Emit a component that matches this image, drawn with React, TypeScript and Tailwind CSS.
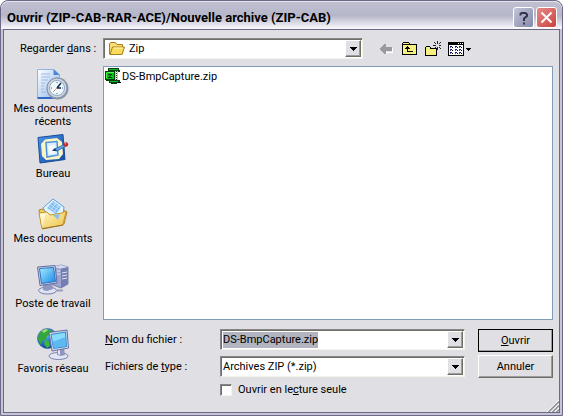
import React from 'react';
import { useEffect, useRef, useState } from 'react';

interface Place {
  id: string;
  label: string;
  icon: React.ReactNode;
}

function RecentIcon() {
  return (
    <svg viewBox="0 0 32 32" className="w-8 h-8" aria-hidden="true">
      <defs>
        <linearGradient id="paper" x1="0" y1="0" x2="1" y2="1">
          <stop offset="0" stopColor="#ffffff" />
          <stop offset="1" stopColor="#8db6ec" />
        </linearGradient>
      </defs>
      <path d="M.5 1.500h16l6 5V30H.5z" fill="url(#paper)" stroke="#8fb3e6" />
      <path d="M.5 30h21" stroke="#2f68c0" strokeWidth="2" />
      <path d="M16.500 1v6h6z" fill="#4d86d6" />
      <path d="M4 6h9M4 9h9M4 12h7M4 15h4M4 18h3M4 21h3M4 24h5" stroke="#9dbbe4" />
      <circle cx="20.500" cy="20.500" r="11" fill="#8793a6" />
      <circle cx="20" cy="20" r="10" fill="#cdd4de" stroke="#8796ac" />
      <circle cx="20" cy="20" r="7.500" fill="#effaff" stroke="#94a9c4" />
      <path d="M20 14v1M20 25v1M14 20h1M25 20h1" stroke="#3b5f8f" />
      <path d="M20 20l4-5M20 20h4" stroke="#16294a" strokeWidth="1.500" />
      <path d="M20 20l-4 4" stroke="#e08a70" />
    </svg>
  );
}

function DesktopIcon() {
  return (
    <svg viewBox="0 0 32 32" className="w-8 h-8" aria-hidden="true">
      <defs>
        <linearGradient id="blotter" x1="0" y1="0" x2="1" y2="1">
          <stop offset="0" stopColor="#4c97ea" />
          <stop offset="1" stopColor="#12479f" />
        </linearGradient>
      </defs>
      <path d="M1 4.500L26 1.500l2 25L3 30z" fill="url(#blotter)" stroke="#174c9c" />
      <path d="M8 6.500l12-1.500 5 4 1 12-4 5L9 27l-4-4-1-12z" fill="#fdf3c4" />
      <path d="M9 9.500l11-1 1 13.500-11 2z" fill="#d9efff" stroke="#4c93dc" strokeWidth="1.500" />
      <path d="M11 13l7-1v8l-6 1z" fill="#ffffff" opacity=".7" />
      <path d="M16 17l10-5 3 1-9 5z" fill="#62a9ec" stroke="#225d9f" strokeWidth=".8" />
      <path d="M15 18l3-3 2 3z" fill="#1c4170" />
      <circle cx="29" cy="11.500" r="2.200" fill="#c32b2b" />
      <circle cx="28.500" cy="10.800" r=".7" fill="#f19b8d" />
    </svg>
  );
}

function DocumentsIcon() {
  return (
    <svg viewBox="0 0 32 32" className="w-8 h-8" aria-hidden="true">
      <defs>
        <linearGradient id="flap" x1="0" y1="0" x2="1" y2="1">
          <stop offset="0" stopColor="#fff7c6" />
          <stop offset="1" stopColor="#efc248" />
        </linearGradient>
      </defs>
      <path d="M2 12l3-1 5 2 16-1 4 2-3 12L5 30z" fill="#f1cb5c" stroke="#b5882b" />
      <path d="M16 1l11 8-1 9-14 1-6-9z" fill="#e3f3ff" stroke="#5d9fe2" />
      <path d="M16 3l8 6-5 7-9-6z" fill="#7fbcf2" />
      <path d="M13 6l8 6M15 4l8 6M11 8l8 6M19 5l-6 8M22 7l-6 8" stroke="#d8ecff" strokeWidth=".7" />
      <path d="M5 30.500L2 15l8-1 3 3 12-2 4-2-3 14z" fill="url(#flap)" stroke="#c6962d" />
      <path d="M5 29L3 16l6-1z" fill="#fffbe0" opacity=".7" />
      <path d="M16 17l7-1-2 6z" fill="#8cc1ee" />
      <path d="M5 31l21-4" stroke="#9c7120" />
    </svg>
  );
}

function ComputerIcon() {
  return (
    <svg viewBox="0 0 32 32" className="w-8 h-8" aria-hidden="true">
      <defs>
        <linearGradient id="screen" x1="0" y1="0" x2="1" y2="1">
          <stop offset="0" stopColor="#a9ecff" />
          <stop offset="1" stopColor="#1687e8" />
        </linearGradient>
      </defs>
      <path d="M16 4l8-2 7 2v17l-7 4-8-3z" fill="#9ca5cf" stroke="#686f9f" strokeWidth=".8" />
      <path d="M24 5l7-1v17l-7 4z" fill="#747eb2" />
      <path d="M16 4l8-2 7 2-7 1.500z" fill="#d6daf0" />
      <path d="M20 8h3M20 11h3M25 10l5-1M25 13l5-1M25 16l5-1" stroke="#e1e5f7" />
      <ellipse cx="10.500" cy="27.500" rx="9" ry="3.500" fill="#dfe2f2" stroke="#7880b2" />
      <path d="M6 21l9-1 1 6-6 2-4-1z" fill="#8d95c3" />
      <path d="M.5 4L18 2.500 20 20 3 22.500z" fill="#cfd3ea" stroke="#656ca3" />
      <path d="M2.500 5.500L16.500 4.500 18.500 18.500 4.500 20.500z" fill="url(#screen)" stroke="#2c75bb" />
      <path d="M20 27.500h6" stroke="#9a9fb8" strokeWidth="2" />
    </svg>
  );
}

function NetworkIcon() {
  return (
    <svg viewBox="0 0 32 32" className="w-8 h-8" aria-hidden="true">
      <defs>
        <radialGradient id="globe" cx=".35" cy=".25" r=".8">
          <stop offset="0" stopColor="#8fd4ff" />
          <stop offset=".5" stopColor="#267fd9" />
          <stop offset="1" stopColor="#103b90" />
        </radialGradient>
      </defs>
      <circle cx="10.500" cy="10.500" r="10" fill="url(#globe)" stroke="#24529a" strokeWidth=".6" />
      <path d="M2 5l7-4 7 2-3 4-3 1-1 4-4 1-1 4-3-5z" fill="#35a63b" />
      <path d="M8 12l4 1 1 5-3 2-3-4z" fill="#3fb33f" />
      <path d="M5 3l4-2 2 1-4 3z" fill="#9be36b" />
      <ellipse cx="21.500" cy="28" rx="9.500" ry="3.500" fill="#e3e6f2" stroke="#7c82ae" />
      <path d="M20 21l7-1 1 7-4 1-4-1z" fill="#8f96bf" />
      <path d="M21 21h2v6l-2-1z" fill="#dfe3f4" />
      <path d="M12 4.500L30 2l1.500 18L15 23z" fill="#d5d9ee" stroke="#666ea4" />
      <path d="M14 6.500L28.500 4l1 14.500-13 2z" fill="#8adafa" stroke="#348bcc" />
      <path d="M15 14l13.500-5 1 9-13 2z" fill="#48adec" opacity=".7" />
    </svg>
  );
}

function FolderIcon() {
  return (
    <svg viewBox="0 0 16 16" className="w-4 h-4" aria-hidden="true">
      <path d="M.5 13V3l1-1.500h5L8 3.500h5.500V13z" fill="#f8df76" stroke="#a67d1b" />
      <path d="M1 13.500L3.500 6h12L13 13.500z" fill="#fbdc5c" stroke="#a67d1b" />
      <path d="M4.500 7h9.500" stroke="#fff7ba" />
    </svg>
  );
}

function ZipIcon() {
  return (
    <svg viewBox="0 0 16 16" className="w-4 h-4 shrink-0" shapeRendering="crispEdges" aria-hidden="true">
      <path d="M3 0h11v2h1v2h-2v8h2v3h-3v1H6v-1H4v-2H1v-1H0V3h3z" fill="#0c3d12" />
      <path d="M4 1h9v1H4zM1 4h8v7H1zM5 13h8v1H5z" fill="#00c41a" />
      <path d="M2 4h7v1H2zM1 5h1v5H1z" fill="#58ed58" />
      <path d="M3 6h4v1H6v1H5v1h2v1H3V9h1V8h1V7H3z" fill="#063f0c" />
      <path d="M10 3h1v9h-1zM12 3h1v9h-1z" fill="#b9cbb9" />
      <path d="M11 4h1v1h-1zM11 6h1v1h-1zM11 8h1v1h-1zM11 10h1v1h-1z" fill="#ffffff" />
      <path d="M13 14h3v1h-3z" fill="#000" />
    </svg>
  );
}

function BackIcon() {
  return (
    <svg viewBox="0 0 16 16" className="w-4 h-4" shapeRendering="crispEdges" aria-hidden="true">
      <path d="M7 13v-2h6V7h1v5H8v1z" fill="#fff" />
      <path d="M1 8V7h1V6h1V5h1V4h1V3h2v3h6v4H7v3H5v-1H4v-1H3v-1H2V9H1z" fill="#9b9b9f" />
    </svg>
  );
}

function UpIcon() {
  return (
    <svg viewBox="0 0 16 16" className="w-4 h-4" shapeRendering="crispEdges" aria-hidden="true">
      <path d="M0 2h1V1h6v1h1v1h7v11H0z" fill="#000" />
      <path d="M1 3V2h6v2h7v9H1z" fill="#f5f080" />
      <path d="M1 3h6v1H1z" fill="#000" />
      <path d="M5 5h1v1h1v1h1v1H6v2h5v1H5V8H3V7h1V6h1z" fill="#000" />
    </svg>
  );
}

function NewFolderIcon() {
  return (
    <svg viewBox="0 0 16 16" className="w-4 h-4" shapeRendering="crispEdges" aria-hidden="true">
      <path d="M0 6h1V5h4v1h1v1h6v8H0z" fill="#000" />
      <path d="M1 6h4v2h6v6H1z" fill="#f5f080" />
      <path
        d="M12 0h1v3h-1zM12 6h1v3h-1zM8 4h3v1H8zM14 4h2v1h-2zM9 1h1v1H9zM10 2h1v1h-1zM14 2h1v1h-1zM15 1h1v1h-1zM14 6h1v1h-1zM15 7h1v1h-1zM10 6h1v1h-1z"
        fill="#222"
      />
    </svg>
  );
}

function ViewIcon() {
  return (
    <svg viewBox="0 0 24 16" className="w-6 h-4" shapeRendering="crispEdges" aria-hidden="true">
      <path d="M0 1h16v14H0z" fill="#000" />
      <path d="M1 4h14v10H1z" fill="#fff" />
      <path d="M10 2h1v1h-1zM12 2h1v1h-1zM14 2h1v1h-1z" fill="#fff" />
      <path d="M2 5h2v1H2zM7 5h2v1H7zM11 5h2v1h-2zM2 8h2v1H2zM7 8h2v1H7zM11 8h2v1h-2zM2 11h2v1H2zM7 11h2v1H7zM11 11h2v1h-2z" fill="#16167c" />
      <path d="M2 6h1v1H2zM7 6h1v1H7zM11 6h1v1h-1zM2 9h1v1H2zM7 9h1v1H7zM11 9h1v1h-1zM2 12h1v1H2zM7 12h1v1H7zM11 12h1v1h-1z" fill="#4a4aa0" />
      <path d="M4 6h1v1H4zM9 6h1v1H9zM13 6h1v1h-1zM4 9h1v1H4zM9 9h1v1H9zM13 9h1v1h-1zM4 12h1v1H4zM9 12h1v1H9zM13 12h1v1h-1z" fill="#000" />
      <path d="M18 7h5v1h-1v1h-1v1h-1V9h-1V8h-1z" fill="#000" />
    </svg>
  );
}

function Arrow() {
  return (
    <span className="flex items-center justify-center w-4 h-[17px] bg-[#e0dfe3] border border-t-white border-l-white border-r-[#716f64] border-b-[#716f64] shadow-[inset_-1px_-1px_0_#9d9da1] shrink-0 pointer-events-none">
      <svg viewBox="0 0 7 4" className="w-[7px] h-1" shapeRendering="crispEdges" aria-hidden="true">
        <path d="M0 0h7v1H6v1H5v1H4v1H3V3H2V2H1V1H0z" fill="#000" />
      </svg>
    </span>
  );
}

const places: Place[] = [
  { id: 'recent', label: 'Mes documents récents', icon: <RecentIcon /> },
  { id: 'desktop', label: 'Bureau', icon: <DesktopIcon /> },
  { id: 'documents', label: 'Mes documents', icon: <DocumentsIcon /> },
  { id: 'computer', label: 'Poste de travail', icon: <ComputerIcon /> },
  { id: 'network', label: 'Favoris réseau', icon: <NetworkIcon /> },
];

const files = ['DS-BmpCapture.zip'];

const tools = [
  { id: 'back', title: 'Précédent', icon: <BackIcon /> },
  { id: 'up', title: 'Dossier parent', icon: <UpIcon /> },
  { id: 'new', title: 'Nouveau dossier', icon: <NewFolderIcon /> },
  { id: 'view', title: 'Affichage', icon: <ViewIcon /> },
];

export default function App() {
  const [fileName, setFileName] = useState(files[0]);
  const [readOnly, setReadOnly] = useState(false);
  const nameRef = useRef<HTMLInputElement>(null);

  useEffect(() => {
    nameRef.current?.focus();
    nameRef.current?.select();
  }, []);

  const field =
    'flex items-center h-[21px] pl-0.5 pr-px bg-white border border-t-[#85858a] border-l-[#85858a] border-r-[#f4f3ee] border-b-[#f4f3ee] shadow-[inset_1px_1px_0_#716f64]';
  const pushButton =
    'h-[23px] bg-[#e0dfe3] border border-t-white border-l-white border-r-[#716f64] border-b-[#716f64] shadow-[inset_-1px_-1px_0_#9d9da1]';

  return (
    <div className="min-h-screen flex flex-col bg-[#c4c4d4] rounded-t-lg border border-[#6b6986] px-0.5 pb-0.5 font-[Roboto,'Liberation_Sans',sans-serif] text-[11px] leading-[13px] text-black">
      {/* Title bar */}
      <header className="-mx-0.5 flex items-center justify-between h-7 pl-1.5 pr-[5px] pt-1 rounded-t-lg border-t border-[#e4e4ee] bg-linear-to-b from-[#c0c0d0] via-[#b6b6ca] to-[#fafafd]">
        <h1 className="font-[Roboto,sans-serif] text-[13px] leading-5 font-bold whitespace-nowrap">
          Ouvrir (ZIP-CAB-RAR-ACE)/Nouvelle archive (ZIP-CAB)
        </h1>
        <div className="flex gap-0.5">
          <button
            aria-label="Aide"
            className="flex items-center justify-center w-[21px] h-[21px] rounded-[3px] border border-white bg-linear-to-br from-[#c3c6d8] to-[#8589a8]"
          >
            <svg viewBox="0 0 12 14" className="w-3 h-3.5" fill="none" stroke="#33364d" strokeWidth="2" aria-hidden="true">
              <path d="M2.500 4.500V3l1-1h4l1.500 1.500V5L6 7.500V10M6 11.500v2" />
            </svg>
          </button>
          <button
            aria-label="Fermer"
            className="flex items-center justify-center w-[21px] h-[21px] rounded-[3px] border border-white bg-linear-to-br from-[#e48a89] to-[#c9403f]"
          >
            <svg viewBox="0 0 13 13" className="w-[13px] h-[13px]" stroke="#fff" strokeWidth="2" aria-hidden="true">
              <path d="M1.500 1.500l10 10M11.500 1.500l-10 10" />
            </svg>
          </button>
        </div>
      </header>

      <main className="relative flex-1 flex flex-col bg-[#e0dfe3] border border-[#6b6986] pt-2 pl-1 pr-1.5 pb-4">
        {/* Toolbar */}
        <div className="flex items-center">
          <label htmlFor="folder" className="w-[95px] pl-3 shrink-0 whitespace-nowrap">
            Regarder <u>d</u>ans :
          </label>
          <div className={`${field} w-[260px]`}>
            <span className="pl-[3px] shrink-0">
              <FolderIcon />
            </span>
            <select id="folder" className="flex-1 min-w-0 appearance-none pl-1 outline-none">
              <option>Zip</option>
            </select>
            <Arrow />
          </div>
          <div className="flex gap-[7px] pl-4">
            {tools.map((tool) => (
              <button key={tool.id} title={tool.title} disabled={tool.id === 'back'}>
                {tool.icon}
              </button>
            ))}
          </div>
        </div>

        <div className="flex-1 flex pt-[7px]">
          {/* Places bar */}
          <nav className="w-[95px] pr-[5px] pt-0.5 shrink-0">
            {places.map((place) => (
              <button key={place.id} className="flex flex-col items-center w-full h-[65px] gap-0.5 px-1">
                {place.icon}
                <span>{place.label}</span>
              </button>
            ))}
          </nav>

          <div className="flex-1 min-w-0 flex flex-col">
            <ul className="flex-1 min-h-[240px] bg-white border border-[#7f9db9] p-px">
              {files.map((file) => (
                <li key={file}>
                  <button className="flex items-center" onClick={() => setFileName(file)}>
                    <ZipIcon />
                    <span className="pl-px">{file}</span>
                  </button>
                </li>
              ))}
            </ul>

            <form className="flex gap-[13px] pt-[9px]" onSubmit={(e) => e.preventDefault()}>
              <div className="flex-1 grid grid-cols-[117px_1fr] gap-y-1.5 items-center">
                <label htmlFor="name" className="pl-0.5">
                  <u>N</u>om du fichier :
                </label>
                <div className={field}>
                  <input
                    id="name"
                    ref={nameRef}
                    value={fileName}
                    onChange={(e) => setFileName(e.target.value)}
                    className="flex-1 min-w-0 leading-4 outline-none selection:bg-[#b2b4bf] selection:text-black"
                  />
                  <Arrow />
                </div>
                <label htmlFor="type" className="pl-0.5">
                  Fichiers de <u>t</u>ype :
                </label>
                <div className={field}>
                  <select id="type" className="flex-1 min-w-0 appearance-none outline-none">
                    <option>Archives ZIP (*.zip)</option>
                  </select>
                  <Arrow />
                </div>
                <label className="col-start-2 flex items-center gap-1.5">
                  <input
                    type="checkbox"
                    checked={readOnly}
                    onChange={(e) => setReadOnly(e.target.checked)}
                    className="appearance-none w-3 h-3 bg-white checked:bg-[#316ac5] border border-t-[#85858a] border-l-[#85858a] border-r-[#f4f3ee] border-b-[#f4f3ee] shadow-[inset_1px_1px_0_#716f64]"
                  />
                  <span>
                    Ouvrir en le<u>c</u>ture seule
                  </span>
                </label>
              </div>
              <div className="flex flex-col gap-[3px] w-[75px]">
                <button type="submit" className={`${pushButton} outline outline-black -outline-offset-1`}>
                  <u>O</u>uvrir
                </button>
                <button type="button" className={pushButton}>
                  Annuler
                </button>
              </div>
            </form>
          </div>
        </div>

        {/* Resize grip */}
        <svg viewBox="0 0 12 12" className="absolute right-0 bottom-0 w-3 h-3" aria-hidden="true">
          <path d="M0 12L12 0M4 12l8-8M8 12l4-4" stroke="#fff" />
          <path d="M1.500 12L12 1.500M5.500 12L12 5.500M9.500 12L12 9.500" stroke="#8d8d95" strokeWidth="1.500" />
        </svg>
      </main>
    </div>
  );
}
